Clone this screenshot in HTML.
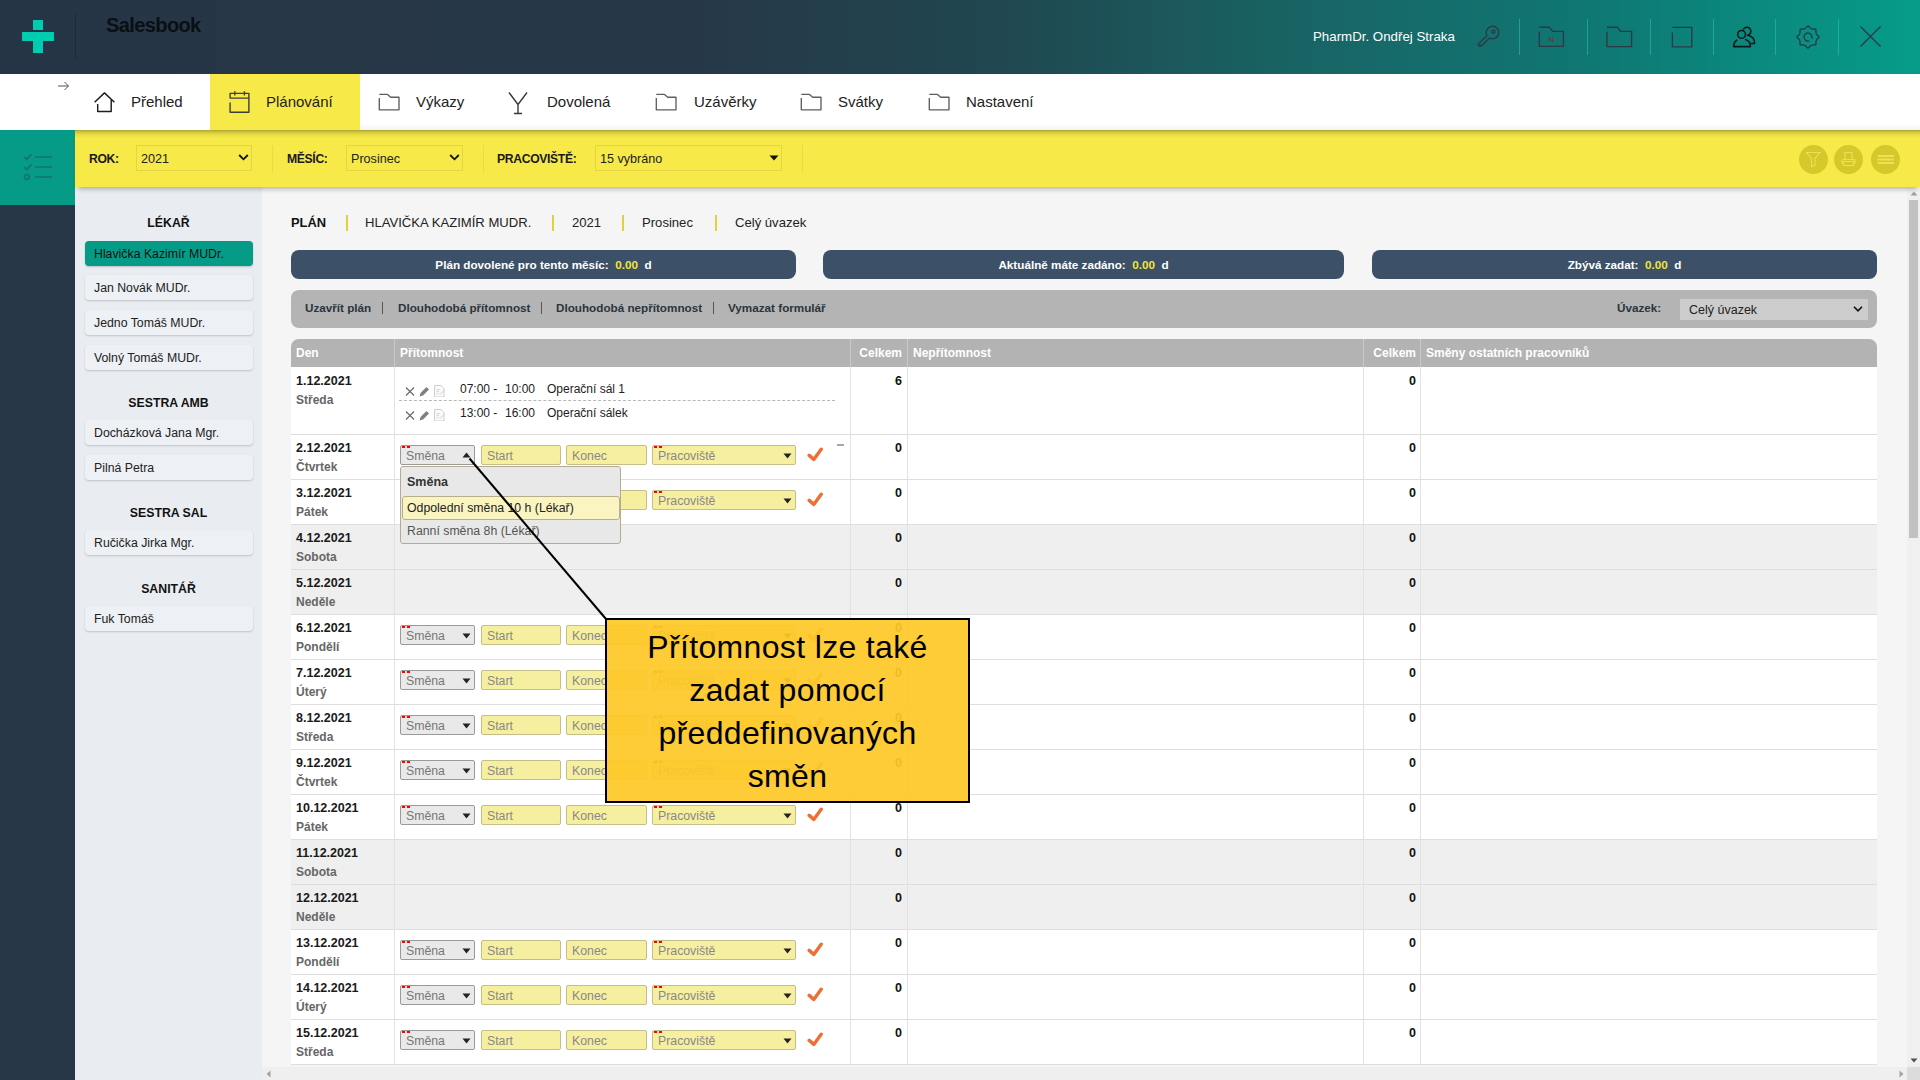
<!DOCTYPE html>
<html><head><meta charset="utf-8"><title>Salesbook</title><style>
*{margin:0;padding:0}
html,body{width:1920px;height:1080px;overflow:hidden;background:#f5f5f5;font-family:"Liberation Sans", sans-serif}
.t{position:absolute;white-space:nowrap;font-family:"Liberation Sans", sans-serif;line-height:1.15}
#hdr{position:absolute;left:0;top:0;width:1920px;height:74px;background:linear-gradient(90deg,#263545 0%,#263848 36.5%,#204750 52%,#186464 67.7%,#0f7873 83.3%,#069c89 100%)}
.nav{top:93px;font-size:15px;color:#222}
.flab{top:151.5px;font-size:12.2px;letter-spacing:-0.35px;font-weight:700;color:#1a1a1a}
.sel,.sel2{position:absolute;top:145px;height:26px;box-sizing:border-box;border:1px solid #e3d545;}
.sel span,.sel2 span{position:absolute;left:4px;top:6px;font-size:12.6px;color:#222;white-space:nowrap}
.gt{text-align:center;font-size:12.3px;font-weight:700;color:#111}
.pb{position:absolute;left:85px;width:168px;height:25px;box-sizing:border-box;border-radius:4px;background:#edf0f4;box-shadow:0 1px 2px rgba(0,0,0,0.18);padding-left:9px;font-size:12.3px;line-height:27px;color:#222;white-space:nowrap}
.pb.act{background:#069b87;color:#111;box-shadow:0 1px 2px rgba(0,0,0,0.2)}
.ibar{position:absolute;top:250px;height:29px;border-radius:8px;background:#3c5068;color:#fff;text-align:center;font-size:11.7px;line-height:29px;white-space:nowrap}
.tool{top:300.5px;font-size:11.7px;font-weight:700;color:#2a3440}
.th{top:347px;font-size:12px;font-weight:700;color:#fff}
.dt{left:296px;font-size:12.5px;font-weight:700;color:#1a1a1a}
.dn{left:296px;font-size:12px;font-weight:700;color:#666}
.tot{width:60px;text-align:right;font-size:12.5px;font-weight:700;color:#111}
.et{font-size:12px;color:#222}
.smena{position:absolute;left:400px;width:75px;height:20px;box-sizing:border-box;border:1px solid #9a9a9a;border-radius:2px;background:#e9e9e9}
.smena span{position:absolute;left:5px;top:3px;font-size:12.3px;color:#777;white-space:nowrap}
.inp{position:absolute;height:20px;box-sizing:border-box;border:1px solid #c4bd8c;border-radius:2px;background:#f7efa0}
.inp span{position:absolute;left:5px;top:3px;font-size:12.3px;color:#888;white-space:nowrap}
</style></head>
<body>
<div id="hdr"></div>
<div style="position:absolute;left:33px;top:20px;width:10px;height:10px;background:#00cdb0"></div>
<div style="position:absolute;left:22px;top:32px;width:32px;height:9px;background:#00cdb0"></div>
<div style="position:absolute;left:33px;top:41px;width:10px;height:12px;background:#00cdb0"></div>
<div style="position:absolute;left:75px;top:14px;width:1px;height:46px;background:rgba(0,0,0,0.22)"></div>
<div class="t" style="left:106px;top:14px;font-size:20px;font-weight:700;color:#0a0f14;letter-spacing:-0.6px">Salesbook</div>
<div class="t" style="left:1313px;top:29px;font-size:13.3px;color:#fff">PharmDr. Ondřej Straka</div>
<div style="position:absolute;left:1519px;top:19px;width:1px;height:36px;background:rgba(40,200,170,0.55)"></div>
<div style="position:absolute;left:1587px;top:19px;width:1px;height:36px;background:rgba(40,200,170,0.55)"></div>
<div style="position:absolute;left:1650px;top:19px;width:1px;height:36px;background:rgba(40,200,170,0.55)"></div>
<div style="position:absolute;left:1713px;top:19px;width:1px;height:36px;background:rgba(40,200,170,0.55)"></div>
<div style="position:absolute;left:1775px;top:19px;width:1px;height:36px;background:rgba(40,200,170,0.55)"></div>
<div style="position:absolute;left:1838px;top:19px;width:1px;height:36px;background:rgba(40,200,170,0.55)"></div>
<svg style="position:absolute;left:1476px;top:24px" width="26" height="26" viewBox="0 0 26 26"><g fill="none" stroke="#2b3a44" stroke-width="1.35" stroke-linecap="round" stroke-linejoin="round"><path d="M10.97 11.52A6.3 6.3 0 1 1 13.47 14.03L5.4 22.1 4.6 21.3 3.6 22.3 2.2 20.9 3 19.4z"/><circle cx="17.4" cy="7.6" r="1.5"/></g></svg>
<svg style="position:absolute;left:1537px;top:25px" width="28" height="24" viewBox="0 0 28 24"><path fill="none" stroke="#2b3a44" stroke-width="1.35" d="M2.3 6.8V21.4H26.4V6.4H15.6L12.3 2.2H2.3"/><text x="14.3" y="16.6" font-family="Liberation Sans" font-size="8" font-weight="700" fill="#6a3a30" text-anchor="middle">N</text></svg>
<svg style="position:absolute;left:1605px;top:25px" width="28" height="24" viewBox="0 0 28 24"><path fill="none" stroke="#2b3a44" stroke-width="1.35" d="M2 6.8V21.6H26.6V6.4H15.6L12.3 2.2H2"/></svg>
<svg style="position:absolute;left:1671px;top:25px" width="23" height="24" viewBox="0 0 23 24"><path fill="none" stroke="#2b3a44" stroke-width="1.35" d="M1.4 7.6V21.9H20.8V2.4H1.4"/></svg>
<svg style="position:absolute;left:1731px;top:25px" width="26" height="24" viewBox="0 0 26 24"><g fill="none" stroke="#0c1a1c" stroke-width="1.6" stroke-linejoin="round" stroke-linecap="round"><circle cx="10.6" cy="9.4" r="3.9"/><path d="M12.62 3.96A4 4 0 1 1 16.6 10.2"/><path d="M5.8 15.2C3.8 16.6 2.6 19 2.6 21.6H19.4C19.4 18.4 17.6 15.6 14.6 14.6"/><path d="M17.6 10.6C21 11.5 23.6 14.5 23.6 18.5H19.6"/></g></svg>
<svg style="position:absolute;left:1795px;top:24px" width="26" height="26" viewBox="0 0 26 26"><g fill="none" stroke="#2b3a44" stroke-width="1.35" stroke-linejoin="round"><path d="M13.00 2.00L13.34 2.11L13.67 2.36L13.98 2.67L14.26 2.99L14.54 3.30L14.80 3.58L15.05 3.84L15.29 4.06L15.54 4.25L15.79 4.41L16.05 4.53L16.31 4.63L16.57 4.74L16.83 4.86L17.10 4.95L17.39 5.02L17.70 5.06L18.03 5.07L18.39 5.07L18.77 5.05L19.19 5.03L19.62 5.00L20.05 5.00L20.46 5.05L20.78 5.22L20.95 5.54L21.00 5.95L21.00 6.38L20.97 6.81L20.95 7.23L20.93 7.61L20.93 7.97L20.94 8.30L20.98 8.61L21.05 8.90L21.14 9.17L21.26 9.43L21.37 9.69L21.47 9.95L21.59 10.21L21.75 10.46L21.94 10.71L22.16 10.95L22.42 11.20L22.70 11.46L23.01 11.74L23.33 12.02L23.64 12.33L23.89 12.66L24.00 13.00L23.89 13.34L23.64 13.67L23.33 13.98L23.01 14.26L22.70 14.54L22.42 14.80L22.16 15.05L21.94 15.29L21.75 15.54L21.59 15.79L21.47 16.05L21.37 16.31L21.26 16.57L21.14 16.83L21.05 17.10L20.98 17.39L20.94 17.70L20.93 18.03L20.93 18.39L20.95 18.77L20.97 19.19L21.00 19.62L21.00 20.05L20.95 20.46L20.78 20.78L20.46 20.95L20.05 21.00L19.62 21.00L19.19 20.97L18.77 20.95L18.39 20.93L18.03 20.93L17.70 20.94L17.39 20.98L17.10 21.05L16.83 21.14L16.57 21.26L16.31 21.37L16.05 21.47L15.79 21.59L15.54 21.75L15.29 21.94L15.05 22.16L14.80 22.42L14.54 22.70L14.26 23.01L13.98 23.33L13.67 23.64L13.34 23.89L13.00 24.00L12.66 23.89L12.33 23.64L12.02 23.33L11.74 23.01L11.46 22.70L11.20 22.42L10.95 22.16L10.71 21.94L10.46 21.75L10.21 21.59L9.95 21.47L9.69 21.37L9.43 21.26L9.17 21.14L8.90 21.05L8.61 20.98L8.30 20.94L7.97 20.93L7.61 20.93L7.23 20.95L6.81 20.97L6.38 21.00L5.95 21.00L5.54 20.95L5.22 20.78L5.05 20.46L5.00 20.05L5.00 19.62L5.03 19.19L5.05 18.77L5.07 18.39L5.07 18.03L5.06 17.70L5.02 17.39L4.95 17.10L4.86 16.83L4.74 16.57L4.63 16.31L4.53 16.05L4.41 15.79L4.25 15.54L4.06 15.29L3.84 15.05L3.58 14.80L3.30 14.54L2.99 14.26L2.67 13.98L2.36 13.67L2.11 13.34L2.00 13.00L2.11 12.66L2.36 12.33L2.67 12.02L2.99 11.74L3.30 11.46L3.58 11.20L3.84 10.95L4.06 10.71L4.25 10.46L4.41 10.21L4.53 9.95L4.63 9.69L4.74 9.43L4.86 9.17L4.95 8.90L5.02 8.61L5.06 8.30L5.07 7.97L5.07 7.61L5.05 7.23L5.03 6.81L5.00 6.38L5.00 5.95L5.05 5.54L5.22 5.22L5.54 5.05L5.95 5.00L6.38 5.00L6.81 5.03L7.23 5.05L7.61 5.07L7.97 5.07L8.30 5.06L8.61 5.02L8.90 4.95L9.17 4.86L9.43 4.74L9.69 4.63L9.95 4.53L10.21 4.41L10.46 4.25L10.71 4.06L10.95 3.84L11.20 3.58L11.46 3.30L11.74 2.99L12.02 2.67L12.33 2.36L12.66 2.11z"/><path d="M14.24 16.8A4 4 0 1 1 16.65 14.63"/></g></svg>
<svg style="position:absolute;left:1859px;top:25px" width="23" height="23" viewBox="0 0 23 23"><path fill="none" stroke="#2b3a44" stroke-width="1.35" d="M1.5 1.5l20 20M21.5 1.5l-20 20"/></svg>
<div style="position:absolute;left:0;top:74px;width:1920px;height:56px;background:#fff"></div>
<div style="position:absolute;left:210px;top:74px;width:150px;height:56px;background:#f7e948"></div>
<div style="position:absolute;left:360px;top:123px;width:1560px;height:7px;background:linear-gradient(rgba(40,40,90,0),rgba(40,40,90,0.05))"></div>
<svg style="position:absolute;left:57px;top:81px" width="13" height="10" viewBox="0 0 13 10"><path d="M1 5h10.5M7.5 1l4 4-4 4" fill="none" stroke="#555" stroke-width="1"/></svg>
<svg style="position:absolute;left:93px;top:91px" width="24" height="22" viewBox="0 0 24 22"><path fill="none" stroke="#1e1e1e" stroke-width="1.45" stroke-linejoin="round" d="M1.6 11.2L11.5 1.9L21.4 11.2M4.7 13V20.4H18.2V8.9"/></svg>
<svg style="position:absolute;left:228px;top:90px" width="24" height="24" viewBox="0 0 24 24"><g fill="none" stroke="#3e3e3e" stroke-width="1.4" stroke-linejoin="round"><path d="M2.1 12.5V22.2H20.9V3.4H2.1V8.1H20.9M6.8 1.3V5.4M16.4 1.3V5.4"/></g></svg>
<div class="t nav" style="left:131px">Přehled</div>
<div class="t nav" style="left:266px">Plánování</div>
<svg style="position:absolute;left:378px;top:92px" width="23" height="20" viewBox="0 0 23 20"><path fill="none" stroke="#5e5e5e" stroke-width="1.35" stroke-linejoin="round" d="M1.3 6V17.8H21V5.2H12.7L9.5 2.4H1.3"/></svg>
<div class="t nav" style="left:416px">Výkazy</div>
<svg style="position:absolute;left:507px;top:91px" width="22" height="24" viewBox="0 0 22 24"><path fill="none" stroke="#3a3a3a" stroke-width="1.4" d="M2 1.5L11 13.5L20 1.5M11 13.5v9M7 22.5h8"/></svg>
<div class="t nav" style="left:547px">Dovolená</div>
<svg style="position:absolute;left:655px;top:92px" width="23" height="20" viewBox="0 0 23 20"><path fill="none" stroke="#5e5e5e" stroke-width="1.35" stroke-linejoin="round" d="M1.3 6V17.8H21V5.2H12.7L9.5 2.4H1.3"/></svg>
<div class="t nav" style="left:694px">Uzávěrky</div>
<svg style="position:absolute;left:800px;top:92px" width="23" height="20" viewBox="0 0 23 20"><path fill="none" stroke="#5e5e5e" stroke-width="1.35" stroke-linejoin="round" d="M1.3 6V17.8H21V5.2H12.7L9.5 2.4H1.3"/></svg>
<div class="t nav" style="left:838px">Svátky</div>
<svg style="position:absolute;left:928px;top:92px" width="23" height="20" viewBox="0 0 23 20"><path fill="none" stroke="#5e5e5e" stroke-width="1.35" stroke-linejoin="round" d="M1.3 6V17.8H21V5.2H12.7L9.5 2.4H1.3"/></svg>
<div class="t nav" style="left:966px">Nastavení</div>
<div style="position:absolute;left:0;top:130px;width:75px;height:950px;background:#263646"></div>
<div style="position:absolute;left:0;top:130px;width:75px;height:75px;background:#069b87"></div>
<svg style="position:absolute;left:22px;top:150px" width="32" height="34" viewBox="0 0 32 34"><g fill="none" stroke="#137668" stroke-width="1.7"><path d="M2.2 6.8l2.6 2.6 4.6-5M2.2 16.8l2.6 2.6 4.6-5"/><circle cx="4.8" cy="27" r="2.3"/><path d="M13 7h17M13 17h17M13 27h17"/></g></svg>
<div style="position:absolute;left:75px;top:187px;width:187px;height:893px;background:#e9edf1"></div>
<div class="t gt" style="left:75px;width:187px;top:216px">LÉKAŘ</div>
<div class="pb act" style="top:241px">Hlavička Kazimír MUDr.</div>
<div class="pb" style="top:275px">Jan Novák MUDr.</div>
<div class="pb" style="top:310px">Jedno Tomáš MUDr.</div>
<div class="pb" style="top:345px">Volný Tomáš MUDr.</div>
<div class="t gt" style="left:75px;width:187px;top:396px">SESTRA AMB</div>
<div class="pb" style="top:420px">Docházková Jana Mgr.</div>
<div class="pb" style="top:455px">Pilná Petra</div>
<div class="t gt" style="left:75px;width:187px;top:506px">SESTRA SAL</div>
<div class="pb" style="top:530px">Ručička Jirka Mgr.</div>
<div class="t gt" style="left:75px;width:187px;top:582px">SANITÁŘ</div>
<div class="pb" style="top:606px">Fuk Tomáš</div>
<div style="position:absolute;left:262px;top:187px;width:1645px;height:880px;background:#f5f5f5"></div>
<div class="t" style="left:291px;top:216px;font-size:12.9px;font-weight:700;color:#111">PLÁN</div>
<div class="t" style="left:365px;top:214.5px;font-size:13.1px;color:#222">HLAVIČKA KAZIMÍR MUDR.</div>
<div class="t" style="left:572px;top:214.5px;font-size:13.1px;color:#222">2021</div>
<div class="t" style="left:642px;top:214.5px;font-size:13.1px;color:#222">Prosinec</div>
<div class="t" style="left:735px;top:214.5px;font-size:13.1px;color:#222">Celý úvazek</div>
<div style="position:absolute;left:346px;top:215px;width:2px;height:16px;background:#e0d23a"></div>
<div style="position:absolute;left:552px;top:215px;width:2px;height:16px;background:#e0d23a"></div>
<div style="position:absolute;left:622px;top:215px;width:2px;height:16px;background:#e0d23a"></div>
<div style="position:absolute;left:715px;top:215px;width:2px;height:16px;background:#e0d23a"></div>
<div class="ibar" style="left:291px;width:505px"><b>Plán dovolené pro tento měsíc:</b>&nbsp;&nbsp;<b style="color:#f3e53a">0.00</b>&nbsp;&nbsp;<b>d</b></div>
<div class="ibar" style="left:823px;width:521px"><b>Aktuálně máte zadáno:</b>&nbsp;&nbsp;<b style="color:#f3e53a">0.00</b>&nbsp;&nbsp;<b>d</b></div>
<div class="ibar" style="left:1372px;width:505px"><b>Zbývá zadat:</b>&nbsp;&nbsp;<b style="color:#f3e53a">0.00</b>&nbsp;&nbsp;<b>d</b></div>
<div style="position:absolute;left:291px;top:290px;width:1586px;height:38px;background:#b4b4b4;border-radius:8px"></div>
<div class="t tool" style="left:305px">Uzavřít plán</div>
<div class="t tool" style="left:398px">Dlouhodobá přítomnost</div>
<div class="t tool" style="left:556px">Dlouhodobá nepřítomnost</div>
<div class="t tool" style="left:728px">Vymazat formulář</div>
<div style="position:absolute;left:382px;top:302px;width:1px;height:12px;background:#555"></div>
<div style="position:absolute;left:541px;top:302px;width:1px;height:12px;background:#555"></div>
<div style="position:absolute;left:713px;top:302px;width:1px;height:12px;background:#555"></div>
<div class="t tool" style="left:1617px;top:301px">Úvazek:</div>
<div style="position:absolute;left:1680px;top:299px;width:188px;height:21px;background:#cccccc"></div>
<div class="t" style="left:1689px;top:303px;font-size:12.5px;color:#222">Celý úvazek</div>
<svg style="position:absolute;left:1853px;top:305px" width="10" height="8" viewBox="0 0 10 8"><path d="M1 1.8l4 4 4-4" fill="none" stroke="#111" stroke-width="1.6"/></svg>
<div style="position:absolute;left:291px;top:339px;width:1586px;height:28px;background:#b3b3b3;border-radius:8px 8px 0 0"></div>
<div style="position:absolute;left:394px;top:339px;width:1px;height:28px;background:#c9c9c9"></div>
<div style="position:absolute;left:850px;top:339px;width:1px;height:28px;background:#c9c9c9"></div>
<div style="position:absolute;left:907px;top:339px;width:1px;height:28px;background:#c9c9c9"></div>
<div style="position:absolute;left:1363px;top:339px;width:1px;height:28px;background:#c9c9c9"></div>
<div style="position:absolute;left:1420px;top:339px;width:1px;height:28px;background:#c9c9c9"></div>
<div class="t th" style="left:296px">Den</div>
<div class="t th" style="left:400px">Přítomnost</div>
<div class="t th" style="left:842px;width:60px;text-align:right">Celkem</div>
<div class="t th" style="left:913px">Nepřítomnost</div>
<div class="t th" style="left:1356px;width:60px;text-align:right">Celkem</div>
<div class="t th" style="left:1426px">Směny ostatních pracovníků</div>
<div style="position:absolute;left:291px;top:367px;width:1586px;height:68px;background:#ffffff;border-bottom:1px solid #dedede;box-sizing:border-box"></div>
<div style="position:absolute;left:394px;top:367px;width:1px;height:68px;background:#e2e2e2"></div>
<div style="position:absolute;left:850px;top:367px;width:1px;height:68px;background:#e2e2e2"></div>
<div style="position:absolute;left:907px;top:367px;width:1px;height:68px;background:#e2e2e2"></div>
<div style="position:absolute;left:1363px;top:367px;width:1px;height:68px;background:#e2e2e2"></div>
<div style="position:absolute;left:1420px;top:367px;width:1px;height:68px;background:#e2e2e2"></div>
<div class="t dt" style="top:374px">1.12.2021</div>
<div class="t dn" style="top:393.5px">Středa</div>
<div class="t tot" style="left:842px;top:374px">6</div>
<div class="t tot" style="left:1356px;top:374px">0</div>
<svg style="position:absolute;left:404px;top:384.5px" width="44" height="12" viewBox="0 0 44 12"><path d="M2 2.5l8 8M10 2.5l-8 8" stroke="#666" stroke-width="1.1"/><path d="M15.5 11.5l1-3.5 6-6 2.5 2.5-6 6z" fill="#808080"/><path d="M30.5 0.5h6.5l3 3v8.5h-9.5z" fill="#fafafa" stroke="#c8c8c8" stroke-width="0.9"/><path d="M32.5 4.5h3M32.5 6.5h2.5M32.5 8.5h2M35.5 10l5-5" stroke="#cfcfcf" stroke-width="0.9" fill="none"/></svg>
<div class="t et" style="left:460px;top:383px">07:00 -</div>
<div class="t et" style="left:505px;top:383px">10:00</div>
<div class="t et" style="left:547px;top:383px">Operační sál 1</div>
<svg style="position:absolute;left:404px;top:408.5px" width="44" height="12" viewBox="0 0 44 12"><path d="M2 2.5l8 8M10 2.5l-8 8" stroke="#666" stroke-width="1.1"/><path d="M15.5 11.5l1-3.5 6-6 2.5 2.5-6 6z" fill="#808080"/><path d="M30.5 0.5h6.5l3 3v8.5h-9.5z" fill="#fafafa" stroke="#c8c8c8" stroke-width="0.9"/><path d="M32.5 4.5h3M32.5 6.5h2.5M32.5 8.5h2M35.5 10l5-5" stroke="#cfcfcf" stroke-width="0.9" fill="none"/></svg>
<div class="t et" style="left:460px;top:407px">13:00 -</div>
<div class="t et" style="left:505px;top:407px">16:00</div>
<div class="t et" style="left:547px;top:407px">Operační sálek</div>
<div style="position:absolute;left:399px;top:400px;width:436px;height:0;border-top:1px dashed #b8b8b8"></div>
<div style="position:absolute;left:291px;top:435px;width:1586px;height:45px;background:#ffffff;border-bottom:1px solid #dedede;box-sizing:border-box"></div>
<div style="position:absolute;left:394px;top:435px;width:1px;height:45px;background:#e2e2e2"></div>
<div style="position:absolute;left:850px;top:435px;width:1px;height:45px;background:#e2e2e2"></div>
<div style="position:absolute;left:907px;top:435px;width:1px;height:45px;background:#e2e2e2"></div>
<div style="position:absolute;left:1363px;top:435px;width:1px;height:45px;background:#e2e2e2"></div>
<div style="position:absolute;left:1420px;top:435px;width:1px;height:45px;background:#e2e2e2"></div>
<div class="t dt" style="top:441px">2.12.2021</div>
<div class="t dn" style="top:460.5px">Čtvrtek</div>
<div class="t tot" style="left:842px;top:441px">0</div>
<div class="t tot" style="left:1356px;top:441px">0</div>
<div class="smena" style="top:445px"><span>Směna</span></div>
<div style="position:absolute;left:402px;top:446px;width:8px;height:2px;background:repeating-linear-gradient(90deg,#f00 0 3px,transparent 3px 5px)"></div>
<svg style="position:absolute;left:462px;top:452px" width="9" height="6" viewBox="0 0 9 6"><path d="M0.5 5.5h8L4.5 0.5z" fill="#222"/></svg>
<div class="inp" style="left:481px;width:80px;top:445px"><span>Start</span></div>
<div class="inp" style="left:566px;width:81px;top:445px"><span>Konec</span></div>
<div class="inp" style="left:652px;width:144px;top:445px"><span>Pracoviště</span></div>
<div style="position:absolute;left:654px;top:446px;width:8px;height:2px;background:repeating-linear-gradient(90deg,#f00 0 3px,transparent 3px 5px)"></div>
<svg style="position:absolute;left:783px;top:453px" width="9" height="6" viewBox="0 0 9 6"><path d="M0.5 0.5h8L4.5 5.5z" fill="#222"/></svg>
<svg style="position:absolute;left:807px;top:447px" width="16" height="15" viewBox="0 0 16 15"><path d="M2.2 8.4L6.8 12.4L14.2 2.2" fill="none" stroke="#ec6f36" stroke-width="3.4" stroke-linejoin="round" stroke-linecap="round"/></svg>
<div style="position:absolute;left:837px;top:444px;width:7px;height:2px;background:#a8a8a8"></div>
<div style="position:absolute;left:291px;top:480px;width:1586px;height:45px;background:#ffffff;border-bottom:1px solid #dedede;box-sizing:border-box"></div>
<div style="position:absolute;left:394px;top:480px;width:1px;height:45px;background:#e2e2e2"></div>
<div style="position:absolute;left:850px;top:480px;width:1px;height:45px;background:#e2e2e2"></div>
<div style="position:absolute;left:907px;top:480px;width:1px;height:45px;background:#e2e2e2"></div>
<div style="position:absolute;left:1363px;top:480px;width:1px;height:45px;background:#e2e2e2"></div>
<div style="position:absolute;left:1420px;top:480px;width:1px;height:45px;background:#e2e2e2"></div>
<div class="t dt" style="top:486px">3.12.2021</div>
<div class="t dn" style="top:505.5px">Pátek</div>
<div class="t tot" style="left:842px;top:486px">0</div>
<div class="t tot" style="left:1356px;top:486px">0</div>
<div class="smena" style="top:490px"><span>Směna</span></div>
<div style="position:absolute;left:402px;top:491px;width:8px;height:2px;background:repeating-linear-gradient(90deg,#f00 0 3px,transparent 3px 5px)"></div>
<svg style="position:absolute;left:462px;top:498px" width="9" height="6" viewBox="0 0 9 6"><path d="M0.5 0.5h8L4.5 5.5z" fill="#222"/></svg>
<div class="inp" style="left:481px;width:80px;top:490px"><span>Start</span></div>
<div class="inp" style="left:566px;width:81px;top:490px"><span>Konec</span></div>
<div class="inp" style="left:652px;width:144px;top:490px"><span>Pracoviště</span></div>
<div style="position:absolute;left:654px;top:491px;width:8px;height:2px;background:repeating-linear-gradient(90deg,#f00 0 3px,transparent 3px 5px)"></div>
<svg style="position:absolute;left:783px;top:498px" width="9" height="6" viewBox="0 0 9 6"><path d="M0.5 0.5h8L4.5 5.5z" fill="#222"/></svg>
<svg style="position:absolute;left:807px;top:492px" width="16" height="15" viewBox="0 0 16 15"><path d="M2.2 8.4L6.8 12.4L14.2 2.2" fill="none" stroke="#ec6f36" stroke-width="3.4" stroke-linejoin="round" stroke-linecap="round"/></svg>
<div style="position:absolute;left:291px;top:525px;width:1586px;height:45px;background:#efefef;border-bottom:1px solid #dedede;box-sizing:border-box"></div>
<div style="position:absolute;left:394px;top:525px;width:1px;height:45px;background:#e2e2e2"></div>
<div style="position:absolute;left:850px;top:525px;width:1px;height:45px;background:#e2e2e2"></div>
<div style="position:absolute;left:907px;top:525px;width:1px;height:45px;background:#e2e2e2"></div>
<div style="position:absolute;left:1363px;top:525px;width:1px;height:45px;background:#e2e2e2"></div>
<div style="position:absolute;left:1420px;top:525px;width:1px;height:45px;background:#e2e2e2"></div>
<div class="t dt" style="top:531px">4.12.2021</div>
<div class="t dn" style="top:550.5px">Sobota</div>
<div class="t tot" style="left:842px;top:531px">0</div>
<div class="t tot" style="left:1356px;top:531px">0</div>
<div style="position:absolute;left:291px;top:570px;width:1586px;height:45px;background:#efefef;border-bottom:1px solid #dedede;box-sizing:border-box"></div>
<div style="position:absolute;left:394px;top:570px;width:1px;height:45px;background:#e2e2e2"></div>
<div style="position:absolute;left:850px;top:570px;width:1px;height:45px;background:#e2e2e2"></div>
<div style="position:absolute;left:907px;top:570px;width:1px;height:45px;background:#e2e2e2"></div>
<div style="position:absolute;left:1363px;top:570px;width:1px;height:45px;background:#e2e2e2"></div>
<div style="position:absolute;left:1420px;top:570px;width:1px;height:45px;background:#e2e2e2"></div>
<div class="t dt" style="top:576px">5.12.2021</div>
<div class="t dn" style="top:595.5px">Neděle</div>
<div class="t tot" style="left:842px;top:576px">0</div>
<div class="t tot" style="left:1356px;top:576px">0</div>
<div style="position:absolute;left:291px;top:615px;width:1586px;height:45px;background:#ffffff;border-bottom:1px solid #dedede;box-sizing:border-box"></div>
<div style="position:absolute;left:394px;top:615px;width:1px;height:45px;background:#e2e2e2"></div>
<div style="position:absolute;left:850px;top:615px;width:1px;height:45px;background:#e2e2e2"></div>
<div style="position:absolute;left:907px;top:615px;width:1px;height:45px;background:#e2e2e2"></div>
<div style="position:absolute;left:1363px;top:615px;width:1px;height:45px;background:#e2e2e2"></div>
<div style="position:absolute;left:1420px;top:615px;width:1px;height:45px;background:#e2e2e2"></div>
<div class="t dt" style="top:621px">6.12.2021</div>
<div class="t dn" style="top:640.5px">Pondělí</div>
<div class="t tot" style="left:842px;top:621px">0</div>
<div class="t tot" style="left:1356px;top:621px">0</div>
<div class="smena" style="top:625px"><span>Směna</span></div>
<div style="position:absolute;left:402px;top:626px;width:8px;height:2px;background:repeating-linear-gradient(90deg,#f00 0 3px,transparent 3px 5px)"></div>
<svg style="position:absolute;left:462px;top:633px" width="9" height="6" viewBox="0 0 9 6"><path d="M0.5 0.5h8L4.5 5.5z" fill="#222"/></svg>
<div class="inp" style="left:481px;width:80px;top:625px"><span>Start</span></div>
<div class="inp" style="left:566px;width:81px;top:625px"><span>Konec</span></div>
<div class="inp" style="left:652px;width:144px;top:625px"><span>Pracoviště</span></div>
<div style="position:absolute;left:654px;top:626px;width:8px;height:2px;background:repeating-linear-gradient(90deg,#f00 0 3px,transparent 3px 5px)"></div>
<svg style="position:absolute;left:783px;top:633px" width="9" height="6" viewBox="0 0 9 6"><path d="M0.5 0.5h8L4.5 5.5z" fill="#222"/></svg>
<svg style="position:absolute;left:807px;top:627px" width="16" height="15" viewBox="0 0 16 15"><path d="M2.2 8.4L6.8 12.4L14.2 2.2" fill="none" stroke="#ec6f36" stroke-width="3.4" stroke-linejoin="round" stroke-linecap="round"/></svg>
<div style="position:absolute;left:291px;top:660px;width:1586px;height:45px;background:#ffffff;border-bottom:1px solid #dedede;box-sizing:border-box"></div>
<div style="position:absolute;left:394px;top:660px;width:1px;height:45px;background:#e2e2e2"></div>
<div style="position:absolute;left:850px;top:660px;width:1px;height:45px;background:#e2e2e2"></div>
<div style="position:absolute;left:907px;top:660px;width:1px;height:45px;background:#e2e2e2"></div>
<div style="position:absolute;left:1363px;top:660px;width:1px;height:45px;background:#e2e2e2"></div>
<div style="position:absolute;left:1420px;top:660px;width:1px;height:45px;background:#e2e2e2"></div>
<div class="t dt" style="top:666px">7.12.2021</div>
<div class="t dn" style="top:685.5px">Úterý</div>
<div class="t tot" style="left:842px;top:666px">0</div>
<div class="t tot" style="left:1356px;top:666px">0</div>
<div class="smena" style="top:670px"><span>Směna</span></div>
<div style="position:absolute;left:402px;top:671px;width:8px;height:2px;background:repeating-linear-gradient(90deg,#f00 0 3px,transparent 3px 5px)"></div>
<svg style="position:absolute;left:462px;top:678px" width="9" height="6" viewBox="0 0 9 6"><path d="M0.5 0.5h8L4.5 5.5z" fill="#222"/></svg>
<div class="inp" style="left:481px;width:80px;top:670px"><span>Start</span></div>
<div class="inp" style="left:566px;width:81px;top:670px"><span>Konec</span></div>
<div class="inp" style="left:652px;width:144px;top:670px"><span>Pracoviště</span></div>
<div style="position:absolute;left:654px;top:671px;width:8px;height:2px;background:repeating-linear-gradient(90deg,#f00 0 3px,transparent 3px 5px)"></div>
<svg style="position:absolute;left:783px;top:678px" width="9" height="6" viewBox="0 0 9 6"><path d="M0.5 0.5h8L4.5 5.5z" fill="#222"/></svg>
<svg style="position:absolute;left:807px;top:672px" width="16" height="15" viewBox="0 0 16 15"><path d="M2.2 8.4L6.8 12.4L14.2 2.2" fill="none" stroke="#ec6f36" stroke-width="3.4" stroke-linejoin="round" stroke-linecap="round"/></svg>
<div style="position:absolute;left:291px;top:705px;width:1586px;height:45px;background:#ffffff;border-bottom:1px solid #dedede;box-sizing:border-box"></div>
<div style="position:absolute;left:394px;top:705px;width:1px;height:45px;background:#e2e2e2"></div>
<div style="position:absolute;left:850px;top:705px;width:1px;height:45px;background:#e2e2e2"></div>
<div style="position:absolute;left:907px;top:705px;width:1px;height:45px;background:#e2e2e2"></div>
<div style="position:absolute;left:1363px;top:705px;width:1px;height:45px;background:#e2e2e2"></div>
<div style="position:absolute;left:1420px;top:705px;width:1px;height:45px;background:#e2e2e2"></div>
<div class="t dt" style="top:711px">8.12.2021</div>
<div class="t dn" style="top:730.5px">Středa</div>
<div class="t tot" style="left:842px;top:711px">0</div>
<div class="t tot" style="left:1356px;top:711px">0</div>
<div class="smena" style="top:715px"><span>Směna</span></div>
<div style="position:absolute;left:402px;top:716px;width:8px;height:2px;background:repeating-linear-gradient(90deg,#f00 0 3px,transparent 3px 5px)"></div>
<svg style="position:absolute;left:462px;top:723px" width="9" height="6" viewBox="0 0 9 6"><path d="M0.5 0.5h8L4.5 5.5z" fill="#222"/></svg>
<div class="inp" style="left:481px;width:80px;top:715px"><span>Start</span></div>
<div class="inp" style="left:566px;width:81px;top:715px"><span>Konec</span></div>
<div class="inp" style="left:652px;width:144px;top:715px"><span>Pracoviště</span></div>
<div style="position:absolute;left:654px;top:716px;width:8px;height:2px;background:repeating-linear-gradient(90deg,#f00 0 3px,transparent 3px 5px)"></div>
<svg style="position:absolute;left:783px;top:723px" width="9" height="6" viewBox="0 0 9 6"><path d="M0.5 0.5h8L4.5 5.5z" fill="#222"/></svg>
<svg style="position:absolute;left:807px;top:717px" width="16" height="15" viewBox="0 0 16 15"><path d="M2.2 8.4L6.8 12.4L14.2 2.2" fill="none" stroke="#ec6f36" stroke-width="3.4" stroke-linejoin="round" stroke-linecap="round"/></svg>
<div style="position:absolute;left:291px;top:750px;width:1586px;height:45px;background:#ffffff;border-bottom:1px solid #dedede;box-sizing:border-box"></div>
<div style="position:absolute;left:394px;top:750px;width:1px;height:45px;background:#e2e2e2"></div>
<div style="position:absolute;left:850px;top:750px;width:1px;height:45px;background:#e2e2e2"></div>
<div style="position:absolute;left:907px;top:750px;width:1px;height:45px;background:#e2e2e2"></div>
<div style="position:absolute;left:1363px;top:750px;width:1px;height:45px;background:#e2e2e2"></div>
<div style="position:absolute;left:1420px;top:750px;width:1px;height:45px;background:#e2e2e2"></div>
<div class="t dt" style="top:756px">9.12.2021</div>
<div class="t dn" style="top:775.5px">Čtvrtek</div>
<div class="t tot" style="left:842px;top:756px">0</div>
<div class="t tot" style="left:1356px;top:756px">0</div>
<div class="smena" style="top:760px"><span>Směna</span></div>
<div style="position:absolute;left:402px;top:761px;width:8px;height:2px;background:repeating-linear-gradient(90deg,#f00 0 3px,transparent 3px 5px)"></div>
<svg style="position:absolute;left:462px;top:768px" width="9" height="6" viewBox="0 0 9 6"><path d="M0.5 0.5h8L4.5 5.5z" fill="#222"/></svg>
<div class="inp" style="left:481px;width:80px;top:760px"><span>Start</span></div>
<div class="inp" style="left:566px;width:81px;top:760px"><span>Konec</span></div>
<div class="inp" style="left:652px;width:144px;top:760px"><span>Pracoviště</span></div>
<div style="position:absolute;left:654px;top:761px;width:8px;height:2px;background:repeating-linear-gradient(90deg,#f00 0 3px,transparent 3px 5px)"></div>
<svg style="position:absolute;left:783px;top:768px" width="9" height="6" viewBox="0 0 9 6"><path d="M0.5 0.5h8L4.5 5.5z" fill="#222"/></svg>
<svg style="position:absolute;left:807px;top:762px" width="16" height="15" viewBox="0 0 16 15"><path d="M2.2 8.4L6.8 12.4L14.2 2.2" fill="none" stroke="#ec6f36" stroke-width="3.4" stroke-linejoin="round" stroke-linecap="round"/></svg>
<div style="position:absolute;left:291px;top:795px;width:1586px;height:45px;background:#ffffff;border-bottom:1px solid #dedede;box-sizing:border-box"></div>
<div style="position:absolute;left:394px;top:795px;width:1px;height:45px;background:#e2e2e2"></div>
<div style="position:absolute;left:850px;top:795px;width:1px;height:45px;background:#e2e2e2"></div>
<div style="position:absolute;left:907px;top:795px;width:1px;height:45px;background:#e2e2e2"></div>
<div style="position:absolute;left:1363px;top:795px;width:1px;height:45px;background:#e2e2e2"></div>
<div style="position:absolute;left:1420px;top:795px;width:1px;height:45px;background:#e2e2e2"></div>
<div class="t dt" style="top:801px">10.12.2021</div>
<div class="t dn" style="top:820.5px">Pátek</div>
<div class="t tot" style="left:842px;top:801px">0</div>
<div class="t tot" style="left:1356px;top:801px">0</div>
<div class="smena" style="top:805px"><span>Směna</span></div>
<div style="position:absolute;left:402px;top:806px;width:8px;height:2px;background:repeating-linear-gradient(90deg,#f00 0 3px,transparent 3px 5px)"></div>
<svg style="position:absolute;left:462px;top:813px" width="9" height="6" viewBox="0 0 9 6"><path d="M0.5 0.5h8L4.5 5.5z" fill="#222"/></svg>
<div class="inp" style="left:481px;width:80px;top:805px"><span>Start</span></div>
<div class="inp" style="left:566px;width:81px;top:805px"><span>Konec</span></div>
<div class="inp" style="left:652px;width:144px;top:805px"><span>Pracoviště</span></div>
<div style="position:absolute;left:654px;top:806px;width:8px;height:2px;background:repeating-linear-gradient(90deg,#f00 0 3px,transparent 3px 5px)"></div>
<svg style="position:absolute;left:783px;top:813px" width="9" height="6" viewBox="0 0 9 6"><path d="M0.5 0.5h8L4.5 5.5z" fill="#222"/></svg>
<svg style="position:absolute;left:807px;top:807px" width="16" height="15" viewBox="0 0 16 15"><path d="M2.2 8.4L6.8 12.4L14.2 2.2" fill="none" stroke="#ec6f36" stroke-width="3.4" stroke-linejoin="round" stroke-linecap="round"/></svg>
<div style="position:absolute;left:291px;top:840px;width:1586px;height:45px;background:#efefef;border-bottom:1px solid #dedede;box-sizing:border-box"></div>
<div style="position:absolute;left:394px;top:840px;width:1px;height:45px;background:#e2e2e2"></div>
<div style="position:absolute;left:850px;top:840px;width:1px;height:45px;background:#e2e2e2"></div>
<div style="position:absolute;left:907px;top:840px;width:1px;height:45px;background:#e2e2e2"></div>
<div style="position:absolute;left:1363px;top:840px;width:1px;height:45px;background:#e2e2e2"></div>
<div style="position:absolute;left:1420px;top:840px;width:1px;height:45px;background:#e2e2e2"></div>
<div class="t dt" style="top:846px">11.12.2021</div>
<div class="t dn" style="top:865.5px">Sobota</div>
<div class="t tot" style="left:842px;top:846px">0</div>
<div class="t tot" style="left:1356px;top:846px">0</div>
<div style="position:absolute;left:291px;top:885px;width:1586px;height:45px;background:#efefef;border-bottom:1px solid #dedede;box-sizing:border-box"></div>
<div style="position:absolute;left:394px;top:885px;width:1px;height:45px;background:#e2e2e2"></div>
<div style="position:absolute;left:850px;top:885px;width:1px;height:45px;background:#e2e2e2"></div>
<div style="position:absolute;left:907px;top:885px;width:1px;height:45px;background:#e2e2e2"></div>
<div style="position:absolute;left:1363px;top:885px;width:1px;height:45px;background:#e2e2e2"></div>
<div style="position:absolute;left:1420px;top:885px;width:1px;height:45px;background:#e2e2e2"></div>
<div class="t dt" style="top:891px">12.12.2021</div>
<div class="t dn" style="top:910.5px">Neděle</div>
<div class="t tot" style="left:842px;top:891px">0</div>
<div class="t tot" style="left:1356px;top:891px">0</div>
<div style="position:absolute;left:291px;top:930px;width:1586px;height:45px;background:#ffffff;border-bottom:1px solid #dedede;box-sizing:border-box"></div>
<div style="position:absolute;left:394px;top:930px;width:1px;height:45px;background:#e2e2e2"></div>
<div style="position:absolute;left:850px;top:930px;width:1px;height:45px;background:#e2e2e2"></div>
<div style="position:absolute;left:907px;top:930px;width:1px;height:45px;background:#e2e2e2"></div>
<div style="position:absolute;left:1363px;top:930px;width:1px;height:45px;background:#e2e2e2"></div>
<div style="position:absolute;left:1420px;top:930px;width:1px;height:45px;background:#e2e2e2"></div>
<div class="t dt" style="top:936px">13.12.2021</div>
<div class="t dn" style="top:955.5px">Pondělí</div>
<div class="t tot" style="left:842px;top:936px">0</div>
<div class="t tot" style="left:1356px;top:936px">0</div>
<div class="smena" style="top:940px"><span>Směna</span></div>
<div style="position:absolute;left:402px;top:941px;width:8px;height:2px;background:repeating-linear-gradient(90deg,#f00 0 3px,transparent 3px 5px)"></div>
<svg style="position:absolute;left:462px;top:948px" width="9" height="6" viewBox="0 0 9 6"><path d="M0.5 0.5h8L4.5 5.5z" fill="#222"/></svg>
<div class="inp" style="left:481px;width:80px;top:940px"><span>Start</span></div>
<div class="inp" style="left:566px;width:81px;top:940px"><span>Konec</span></div>
<div class="inp" style="left:652px;width:144px;top:940px"><span>Pracoviště</span></div>
<div style="position:absolute;left:654px;top:941px;width:8px;height:2px;background:repeating-linear-gradient(90deg,#f00 0 3px,transparent 3px 5px)"></div>
<svg style="position:absolute;left:783px;top:948px" width="9" height="6" viewBox="0 0 9 6"><path d="M0.5 0.5h8L4.5 5.5z" fill="#222"/></svg>
<svg style="position:absolute;left:807px;top:942px" width="16" height="15" viewBox="0 0 16 15"><path d="M2.2 8.4L6.8 12.4L14.2 2.2" fill="none" stroke="#ec6f36" stroke-width="3.4" stroke-linejoin="round" stroke-linecap="round"/></svg>
<div style="position:absolute;left:291px;top:975px;width:1586px;height:45px;background:#ffffff;border-bottom:1px solid #dedede;box-sizing:border-box"></div>
<div style="position:absolute;left:394px;top:975px;width:1px;height:45px;background:#e2e2e2"></div>
<div style="position:absolute;left:850px;top:975px;width:1px;height:45px;background:#e2e2e2"></div>
<div style="position:absolute;left:907px;top:975px;width:1px;height:45px;background:#e2e2e2"></div>
<div style="position:absolute;left:1363px;top:975px;width:1px;height:45px;background:#e2e2e2"></div>
<div style="position:absolute;left:1420px;top:975px;width:1px;height:45px;background:#e2e2e2"></div>
<div class="t dt" style="top:981px">14.12.2021</div>
<div class="t dn" style="top:1000.5px">Úterý</div>
<div class="t tot" style="left:842px;top:981px">0</div>
<div class="t tot" style="left:1356px;top:981px">0</div>
<div class="smena" style="top:985px"><span>Směna</span></div>
<div style="position:absolute;left:402px;top:986px;width:8px;height:2px;background:repeating-linear-gradient(90deg,#f00 0 3px,transparent 3px 5px)"></div>
<svg style="position:absolute;left:462px;top:993px" width="9" height="6" viewBox="0 0 9 6"><path d="M0.5 0.5h8L4.5 5.5z" fill="#222"/></svg>
<div class="inp" style="left:481px;width:80px;top:985px"><span>Start</span></div>
<div class="inp" style="left:566px;width:81px;top:985px"><span>Konec</span></div>
<div class="inp" style="left:652px;width:144px;top:985px"><span>Pracoviště</span></div>
<div style="position:absolute;left:654px;top:986px;width:8px;height:2px;background:repeating-linear-gradient(90deg,#f00 0 3px,transparent 3px 5px)"></div>
<svg style="position:absolute;left:783px;top:993px" width="9" height="6" viewBox="0 0 9 6"><path d="M0.5 0.5h8L4.5 5.5z" fill="#222"/></svg>
<svg style="position:absolute;left:807px;top:987px" width="16" height="15" viewBox="0 0 16 15"><path d="M2.2 8.4L6.8 12.4L14.2 2.2" fill="none" stroke="#ec6f36" stroke-width="3.4" stroke-linejoin="round" stroke-linecap="round"/></svg>
<div style="position:absolute;left:291px;top:1020px;width:1586px;height:45px;background:#ffffff;border-bottom:1px solid #dedede;box-sizing:border-box"></div>
<div style="position:absolute;left:394px;top:1020px;width:1px;height:45px;background:#e2e2e2"></div>
<div style="position:absolute;left:850px;top:1020px;width:1px;height:45px;background:#e2e2e2"></div>
<div style="position:absolute;left:907px;top:1020px;width:1px;height:45px;background:#e2e2e2"></div>
<div style="position:absolute;left:1363px;top:1020px;width:1px;height:45px;background:#e2e2e2"></div>
<div style="position:absolute;left:1420px;top:1020px;width:1px;height:45px;background:#e2e2e2"></div>
<div class="t dt" style="top:1026px">15.12.2021</div>
<div class="t dn" style="top:1045.5px">Středa</div>
<div class="t tot" style="left:842px;top:1026px">0</div>
<div class="t tot" style="left:1356px;top:1026px">0</div>
<div class="smena" style="top:1030px"><span>Směna</span></div>
<div style="position:absolute;left:402px;top:1031px;width:8px;height:2px;background:repeating-linear-gradient(90deg,#f00 0 3px,transparent 3px 5px)"></div>
<svg style="position:absolute;left:462px;top:1038px" width="9" height="6" viewBox="0 0 9 6"><path d="M0.5 0.5h8L4.5 5.5z" fill="#222"/></svg>
<div class="inp" style="left:481px;width:80px;top:1030px"><span>Start</span></div>
<div class="inp" style="left:566px;width:81px;top:1030px"><span>Konec</span></div>
<div class="inp" style="left:652px;width:144px;top:1030px"><span>Pracoviště</span></div>
<div style="position:absolute;left:654px;top:1031px;width:8px;height:2px;background:repeating-linear-gradient(90deg,#f00 0 3px,transparent 3px 5px)"></div>
<svg style="position:absolute;left:783px;top:1038px" width="9" height="6" viewBox="0 0 9 6"><path d="M0.5 0.5h8L4.5 5.5z" fill="#222"/></svg>
<svg style="position:absolute;left:807px;top:1032px" width="16" height="15" viewBox="0 0 16 15"><path d="M2.2 8.4L6.8 12.4L14.2 2.2" fill="none" stroke="#ec6f36" stroke-width="3.4" stroke-linejoin="round" stroke-linecap="round"/></svg>
<div style="position:absolute;left:400px;top:466px;width:221px;height:78px;background:#e8e8e8;border:1px solid #b5ab93;border-radius:3px;box-sizing:border-box"></div>
<div class="t" style="left:407px;top:475px;font-size:12.5px;font-weight:700;color:#333">Směna</div>
<div style="position:absolute;left:402px;top:496px;width:218px;height:24px;background:#faf4c1;border:1px solid #b8ae8a;border-radius:3px;box-sizing:border-box"></div>
<div class="t" style="left:407px;top:501px;font-size:12.3px;color:#222">Odpolední směna 10 h (Lékař)</div>
<div class="t" style="left:407px;top:523.5px;font-size:12.3px;color:#555">Ranní směna 8h (Lékař)</div>
<svg style="position:absolute;left:0;top:0" width="1920" height="1080"><path d="M469.5 458.5L606 619" stroke="#000" stroke-width="2"/></svg>
<div style="position:absolute;left:605px;top:618px;width:365px;height:185px;box-sizing:border-box;border:2px solid #000;background:rgba(253,200,40,0.93)"></div>
<div class="t" style="left:605px;top:626px;width:365px;text-align:center;font-size:32px;letter-spacing:0.35px;line-height:43px;color:#000;white-space:normal">Přítomnost lze také<br>zadat pomocí<br>předdefinovaných<br>směn</div>
<div style="position:absolute;left:1907px;top:187px;width:13px;height:880px;background:#f0f0f0"></div>
<div style="position:absolute;left:1909px;top:200px;width:9px;height:338px;background:#c1c1c1"></div>
<svg style="position:absolute;left:1910px;top:191px" width="8" height="5" viewBox="0 0 8 5"><path d="M0.5 4.5h7L4 0.5z" fill="#a0a0a0"/></svg>
<svg style="position:absolute;left:1910px;top:1058px" width="8" height="5" viewBox="0 0 8 5"><path d="M0.5 0.5h7L4 4.5z" fill="#505050"/></svg>
<div style="position:absolute;left:262px;top:1067px;width:1645px;height:13px;background:#efefef"></div>
<svg style="position:absolute;left:266px;top:1070px" width="5" height="8" viewBox="0 0 5 8"><path d="M4.5 0.5v7L0.5 4z" fill="#a3a3a3"/></svg>
<svg style="position:absolute;left:1899px;top:1070px" width="5" height="8" viewBox="0 0 5 8"><path d="M0.5 0.5v7L4.5 4z" fill="#a3a3a3"/></svg>
<div style="position:absolute;left:1907px;top:1067px;width:13px;height:13px;background:#dcdcdc"></div>
<div style="position:absolute;left:75px;top:131px;width:1845px;height:56px;background:#f7e948;box-shadow:0 5px 5px -3px rgba(0,0,0,0.28)"></div>
<div style="position:absolute;left:75px;top:130px;width:1845px;height:8px;background:linear-gradient(#aba236 0%,#cfc53a 25%,#e7dd43 60%,#f7e948 100%)"></div>
<div class="t flab" style="left:89px">ROK:</div>
<div class="sel" style="left:136px;width:116px"><span>2021</span></div>
<div style="position:absolute;left:272px;top:145px;width:1px;height:27px;background:rgba(0,0,0,0.06)"></div>
<div class="t flab" style="left:287px">MĚSÍC:</div>
<div class="sel" style="left:346px;width:117px"><span>Prosinec</span></div>
<div style="position:absolute;left:483px;top:145px;width:1px;height:27px;background:rgba(0,0,0,0.06)"></div>
<div class="t flab" style="left:497px">PRACOVIŠTĚ:</div>
<div class="sel2" style="left:595px;width:187px"><span>15 vybráno</span></div>
<div style="position:absolute;left:802px;top:145px;width:1px;height:27px;background:rgba(0,0,0,0.06)"></div>
<svg style="position:absolute;left:238px;top:153px" width="11" height="9" viewBox="0 0 11 9"><path d="M1.2 2l4.3 4.3L9.8 2" fill="none" stroke="#111" stroke-width="1.8"/></svg>
<svg style="position:absolute;left:449px;top:153px" width="11" height="9" viewBox="0 0 11 9"><path d="M1.2 2l4.3 4.3L9.8 2" fill="none" stroke="#111" stroke-width="1.8"/></svg>
<svg style="position:absolute;left:769px;top:155px" width="10" height="6" viewBox="0 0 10 6"><path d="M0.5 0.5h9L5 5.5z" fill="#111"/></svg>
<div style="position:absolute;left:1799.0px;top:144.5px;width:29px;height:29px;border-radius:50%;background:#d4c82b"></div>
<div style="position:absolute;left:1834.0px;top:144.5px;width:29px;height:29px;border-radius:50%;background:#d4c82b"></div>
<div style="position:absolute;left:1870.5px;top:144.5px;width:29px;height:29px;border-radius:50%;background:#d4c82b"></div>
<svg style="position:absolute;left:1799px;top:144px" width="29" height="29" viewBox="0 0 29 29"><path fill="none" stroke="#ede055" stroke-width="1.1" d="M7.5 8.5h13.5l-5 6v6.8l-3.5 1.3v-8.1z"/></svg>
<svg style="position:absolute;left:1834px;top:144px" width="29" height="29" viewBox="0 0 29 29"><path fill="none" stroke="#ede055" stroke-width="1.1" d="M11 8.5h7v7h-7zM8 16v4M8.5 15.5h3M17.5 15.5h3.3v4.5M9.5 17.5h10v4h-10z"/></svg>
<svg style="position:absolute;left:1870.5px;top:144px" width="29" height="29" viewBox="0 0 29 29"><path fill="none" stroke="#ede055" stroke-width="1.8" d="M6.5 12h16.5M6.5 15.5h16.5M6.5 19h16.5"/></svg>
</body></html>
